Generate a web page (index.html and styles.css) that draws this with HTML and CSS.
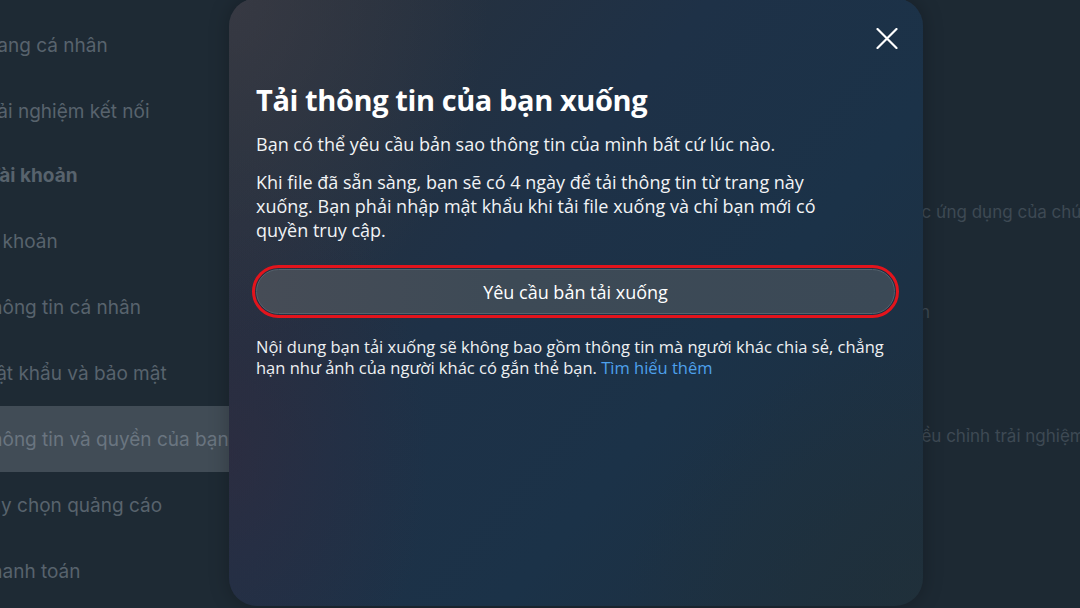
FILE: index.html
```html
<!DOCTYPE html>
<html lang="vi">
<head>
<meta charset="utf-8">
<link rel="stylesheet" href="styles.css">
</head>
<body>
<div class="page">
  <nav class="sidebar">
    <div class="nav-item">Trang cá nhân</div>
    <div class="nav-item">Trải nghiệm kết nối</div>
    <div class="nav-item nav-head">Tài khoản</div>
    <div class="nav-item nav-shift">Tài khoản</div>
    <div class="nav-item">Thông tin cá nhân</div>
    <div class="nav-item">Mật khẩu và bảo mật</div>
    <div class="nav-item active">Thông tin và quyền của bạn</div>
    <div class="nav-item">Tùy chọn quảng cáo</div>
    <div class="nav-item">Thanh toán</div>
  </nav>
  <main class="main">
    <div class="main-row r1">các ứng dụng của chúng tôi</div>
    <div class="main-row r2">bạn</div>
    <div class="main-row r3">Điều chỉnh trải nghiệm</div>
  </main>
</div>

<section class="modal">
  <div class="close-row">
    <svg class="close" width="22" height="21" viewBox="0 0 22 21" aria-label="Đóng">
      <path d="M1.5 1 L20.5 20 M20.5 1 L1.5 20" stroke="#fff" stroke-width="2.2" stroke-linecap="round" fill="none"/>
    </svg>
  </div>
  <h1 class="title">Tải thông tin của bạn xuống</h1>
  <p class="text p1">Bạn có thể yêu cầu bản sao thông tin của mình bất cứ lúc nào.</p>
  <p class="text p2">Khi file đã sẵn sàng, bạn sẽ có 4 ngày để tải thông tin từ trang này<br>xuống. Bạn phải nhập mật khẩu khi tải file xuống và chỉ bạn mới có<br>quyền truy cập.</p>
  <button class="request">Yêu cầu bản tải xuống</button>
  <p class="note">Nội dung bạn tải xuống sẽ không bao gồm thông tin mà người khác chia sẻ, chẳng<br>hạn như ảnh của người khác có gắn thẻ bạn. <a class="link" href="#">Tìm hiểu thêm</a></p>
</section>
</body>
</html>
```
FILE: styles.css
```css
* { box-sizing: border-box; }
html, body {
  margin: 0;
  width: 1080px;
  height: 608px;
  overflow: hidden;
  background: #1d2933;
}
body { position: relative; font-family: "Open Sans", "Noto Sans", sans-serif; }

.page {
  display: grid;
  grid-template-columns: 230px 1fr;
  height: 608px;
}

.sidebar {
  overflow: hidden;
  padding-top: 12px;
  background: #1e2a34;
}
.nav-item {
  height: 66px;
  display: flex;
  align-items: center;
  white-space: nowrap;
  font-family: Inter, "Open Sans", sans-serif;
  font-size: 19px;
  color: #58636d;
  text-indent: -21px;
}
.nav-head { font-weight: 700; text-indent: -12px; margin-top: -2px; }
.nav-shift { text-indent: -29px; }
.nav-item.active { background: #414c56; color: #6a7580; }

.main {
  overflow: hidden;
  padding-left: 660px;
  padding-top: 200px;
}
.main-row {
  white-space: nowrap;
  font-family: Inter, "Open Sans", sans-serif;
  font-size: 17px;
  color: #3e4954;
  height: 24px;
  line-height: 24px;
}
.r1 { padding-left: 12px; }
.r2 { margin-top: 76px; padding-left: 10px; }
.r3 { margin-top: 100px; padding-left: 15px; }

.modal {
  position: absolute;
  left: 229px;
  top: -2px;
  width: 694px;
  height: 608px;
  border-radius: 28px;
  padding: 30px 28px 0 27px;
  color: #fff;
  background:
    radial-gradient(ellipse 260px 340px at 0% 0%, rgba(62,62,72,0.65), transparent 100%),
    radial-gradient(ellipse 200px 300px at 0% 75%, rgba(52,42,62,0.55), transparent 100%),
    radial-gradient(ellipse 300px 260px at 100% 100%, rgba(32,48,56,0.7), transparent 100%),
    linear-gradient(130deg, #2a3039 0%, #1e3147 40%, #1b3248 65%, #1e2f3e 100%);
  box-shadow: 0 0 20px rgba(0,0,0,0.25);
}
.close-row {
  display: flex;
  justify-content: flex-end;
  margin-right: -3px;
  height: 21px;
}
.close { display: block; }

.title {
  margin: 33px 0 0;
  font-size: 29px;
  line-height: 36px;
  font-weight: 700;
  letter-spacing: -0.4px;
}
.text {
  margin: 0;
  font-size: 18px;
  line-height: 24px;
  color: #f1f3f5;
}
.p1 { margin-top: 14px; }
.p2 { margin-top: 14px; }

.request {
  display: block;
  width: 100%;
  height: 45px;
  margin-top: 27px;
  border-radius: 23px;
  border: 1px solid #56626d;
  background: linear-gradient(90deg, #464c56 0%, #3d4a56 40%, #3b4956 100%);
  color: #fff;
  font-family: "Open Sans", "Noto Sans", sans-serif;
  font-size: 18px;
  outline: 3px solid #e3141c;
  outline-offset: 1px;
}

.note {
  margin: 22px 0 0;
  font-size: 16.5px;
  line-height: 21px;
  color: #eef0f2;
}
.link { color: #4ea1ec; text-decoration: none; }
```
